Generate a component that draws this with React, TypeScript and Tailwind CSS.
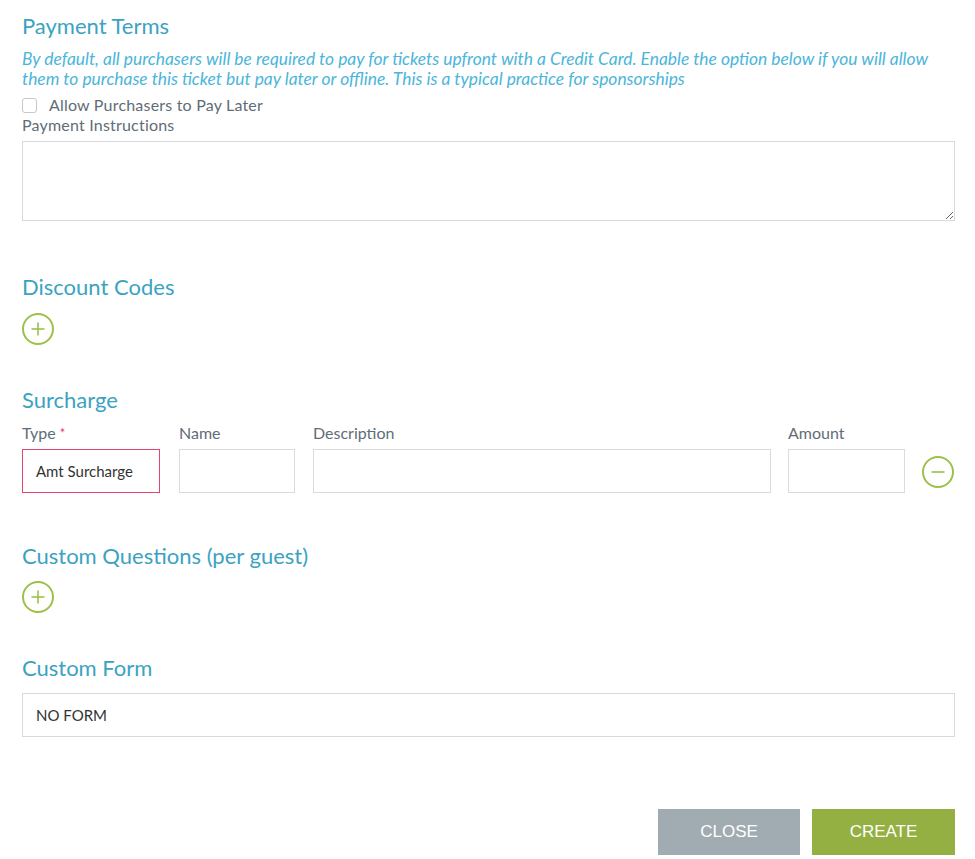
const heading = "text-[22px] leading-[28px] text-[#3ba3c1]";
const label = "text-[16px] leading-[20px] text-[#5f6d77]";

function CircleButton({ minus = false }: { minus?: boolean }) {
  return (
    <button type="button" className="flex h-8 w-8 items-center justify-center text-[#9cc14a]" aria-label={minus ? "Remove" : "Add"}>
      <svg className="h-8 w-8" viewBox="0 0 32 32" fill="none" stroke="currentColor">
        <circle cx="16" cy="16" r="15" strokeWidth={2} />
        <path d="M9.5 16h13" strokeWidth={1.6} />
        {!minus && <path d="M16 9.5v13" strokeWidth={1.6} />}
      </svg>
    </button>
  );
}

export default function App() {
  return (
    <div className="min-h-[859px] bg-white pl-[22px] pr-5 pt-[12px] font-['Lato','Open_Sans',sans-serif]">
      {/* Payment terms */}
      <h2 className={heading}>Payment Terms</h2>
      <p className="mt-[9px] whitespace-nowrap text-[17.4px] leading-[20px] italic text-[#4bb5db]">
        By default, all purchasers will be required to pay for tickets upfront with a Credit Card. Enable the option below if you will allow
        <br />
        them to purchase this ticket but pay later or offline. This is a typical practice for sponsorships
      </p>
      <label className={`mt-[6px] flex items-center gap-3 ${label}`}>
        <span className="h-[15px] w-[15px] rounded-[3px] border border-[#c3c9cd] bg-white" />
        <span className="tracking-[0.2px]">Allow Purchasers to Pay Later</span>
      </label>
      <div className={`${label} tracking-[0.2px]`}>Payment Instructions</div>
      <textarea className="mt-[6px] block h-[80px] w-full resize-y border border-[#d5dbde] bg-white p-2 text-[15px] outline-none" />

      {/* Discount codes */}
      <h2 className={`mt-[52px] ${heading}`}>Discount Codes</h2>
      <div className="mt-[12px]">
        <CircleButton />
      </div>

      {/* Surcharge */}
      <h2 className={`mt-[41px] ${heading}`}>Surcharge</h2>
      <div className="mt-[9px] flex items-end">
        <div className="w-[138px]">
          <div className={label}>
            Type <span className="text-[13px] align-top text-[#e23a64]">*</span>
          </div>
          <div className="mt-[6px] flex h-[44px] items-center border border-[#e2466e] px-[13px] text-[15px] text-[#333]">
            Amt Surcharge
          </div>
        </div>
        <div className="ml-[19px] w-[116px]">
          <div className={label}>Name</div>
          <input className="mt-[6px] block h-[44px] w-full border border-[#d8dcde] px-3 outline-none" />
        </div>
        <div className="ml-[18px] flex-1">
          <div className={label}>Description</div>
          <input className="mt-[6px] block h-[44px] w-full border border-[#d8dcde] px-3 outline-none" />
        </div>
        <div className="ml-[17px] w-[117px]">
          <div className={label}>Amount</div>
          <input className="mt-[6px] block h-[44px] w-full border border-[#d8dcde] px-3 outline-none" />
        </div>
        <div className="ml-[17px] mb-[5px] mr-[1px]">
          <CircleButton minus />
        </div>
      </div>

      {/* Custom questions */}
      <h2 className={`mt-[49px] ${heading}`}>Custom Questions (per guest)</h2>
      <div className="mt-[11px]">
        <CircleButton />
      </div>

      {/* Custom form */}
      <h2 className={`mt-[41px] ${heading}`}>Custom Form</h2>
      <div className="mt-[11px] flex h-[44px] items-center border border-[#d5dbde] px-[13px] text-[15px] text-[#333]">
        NO FORM
      </div>

      <div className="mt-[72px] flex justify-end gap-3 font-['Liberation_Sans',Arial,sans-serif]">
        <button type="button" className="h-[46px] w-[142px] bg-[#a0abb2] text-[17px] text-white">CLOSE</button>
        <button type="button" className="h-[46px] w-[143px] bg-[#95b042] text-[17px] text-white">CREATE</button>
      </div>
    </div>
  );
}
